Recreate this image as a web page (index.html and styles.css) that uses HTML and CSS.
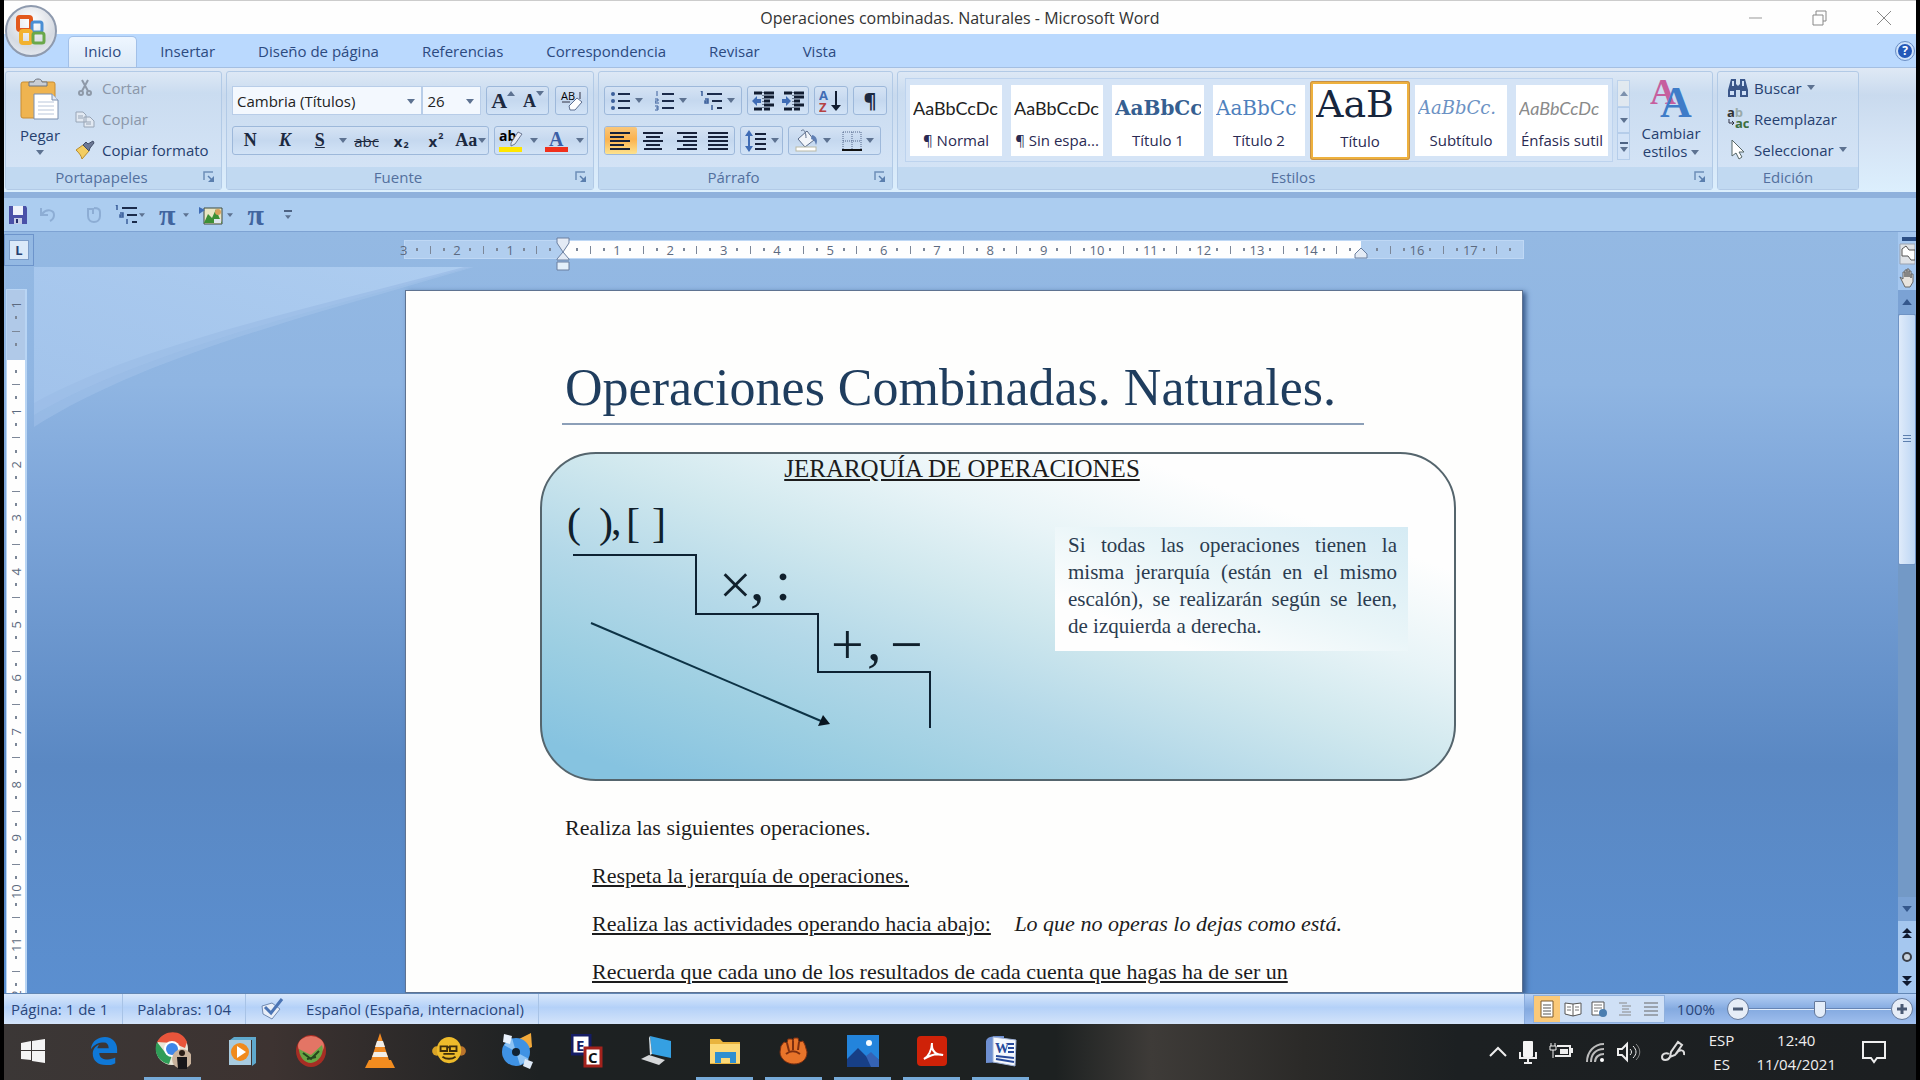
FILE: index.html
```html
<!DOCTYPE html>
<html lang="es">
<head>
    <meta charset="UTF-8">
    <meta name="viewport" content="width=device-width, initial-scale=1.0">
    <title>Operaciones combinadas. Naturales - Microsoft Word</title>
    <link rel="stylesheet" href="styles.css">
</head>
<body>
    <!-- shared symbols -->
    <svg class="defs" aria-hidden="true">
        <symbol id="caret" viewBox="0 0 8 5"><path d="M0 0h8L4 5z" fill="currentColor"/></symbol>
        <symbol id="launcher" viewBox="0 0 12 12"><path d="M1 9V1h9" fill="none" stroke="#6d8fb8" stroke-width="1.5"/><path d="M5 5l4 4" stroke="#5b7fae" stroke-width="1.5"/><path d="M11 5v6H5z" fill="#5b7fae"/></symbol>
        <symbol id="multilevel" viewBox="0 0 24 20"><path d="M8 3h15M13 10h10M18 17h5" stroke="#1b2b4b" stroke-width="2"/><path d="M2 1l1-1v5M6 8h3v4H6v-2h3M13 14v5" stroke="#3b5f9b" stroke-width="1.5" fill="none"/></symbol>
    </svg>

    <header class="titlebar">
        <h1>Operaciones combinadas. Naturales - Microsoft Word</h1>
        <div class="window-buttons">
            <button aria-label="Minimizar"><svg width="16" height="16"><path d="M1 8h13" stroke="#999"/></svg></button>
            <button aria-label="Restaurar"><svg width="16" height="16"><path d="M1 5h10v10H1zM4 5V1h10v10h-3" fill="none" stroke="#888"/></svg></button>
            <button aria-label="Cerrar"><svg width="16" height="16"><path d="M1 1l14 14M15 1L1 15" stroke="#888"/></svg></button>
        </div>
    </header>

    <button class="office-button" aria-label="Botón de Office">
        <svg width="34" height="36" viewBox="0 0 34 36" fill="none" stroke-width="4">
            <rect x="4" y="4" width="13" height="13" rx="2" stroke="#e2581c"/>
            <rect x="18" y="9" width="10" height="10" rx="2" stroke="#4b8fd4" stroke-width="3"/>
            <rect x="7" y="18" width="10" height="12" rx="2" stroke="#f2b230"/>
            <rect x="19" y="20" width="11" height="10" rx="2" stroke="#6aa84a" stroke-width="3"/>
        </svg>
    </button>

    <nav class="tabs">
        <a class="tab active" href="#inicio">Inicio</a>
        <a class="tab" href="#insertar">Insertar</a>
        <a class="tab" href="#diseno">Diseño de página</a>
        <a class="tab" href="#referencias">Referencias</a>
        <a class="tab" href="#correspondencia">Correspondencia</a>
        <a class="tab" href="#revisar">Revisar</a>
        <a class="tab" href="#vista">Vista</a>
        <button class="help" aria-label="Ayuda">?</button>
    </nav>

    <section class="ribbon" id="inicio">
        <div class="group clipboard">
            <div class="group-body">
                <button class="big">
                    <svg width="40" height="42" viewBox="0 0 40 42">
                        <rect x="1" y="4" width="34" height="36" rx="2" fill="#efb450" stroke="#c98d32"/>
                        <path d="M9 8V4h5c0-4 8-4 8 0h5v4z" fill="#c9ced6" stroke="#6d7480"/>
                        <path d="M14 16h18l6 6v19H14z" fill="#fff" stroke="#7b8faf"/>
                        <path d="M32 16v6h6" fill="#dfe8f5" stroke="#7b8faf"/>
                        <path d="M18 24h16M18 28h16M18 32h16M18 36h16" stroke="#b9c6da"/>
                    </svg>
                    <span>Pegar</span>
                    <svg class="caret"><use href="#caret"/></svg>
                </button>
                <div class="stack">
                    <button disabled><svg width="20" height="20"><path d="M7 2l6 11M13 2L7 13" stroke="#8e99a8" stroke-width="2"/><circle cx="6" cy="15" r="2" fill="none" stroke="#8e99a8" stroke-width="2"/><circle cx="14" cy="15" r="2" fill="none" stroke="#8e99a8" stroke-width="2"/></svg>Cortar</button>
                    <button disabled><svg width="20" height="20"><path d="M1 3h7l3 3v7H1zM9 8h6l4 4v6H9z" fill="#e2e9f2" stroke="#98a5b6"/><path d="M11 13h5M11 15h5M3 7h5M3 9h5" stroke="#98a5b6"/></svg>Copiar</button>
                    <button><svg width="20" height="20"><path d="M1 10l7-5 6 6-7 8c-1-4-3-6-6-9z" fill="#f3cd62" stroke="#b98d2e"/><path d="M8 5l3-3 2 2 5-3 1 2-4 5-1 3z" fill="#6c7894" stroke="#434e68"/></svg>Copiar formato</button>
                </div>
            </div>
            <footer>Portapapeles<svg class="launch"><use href="#launcher"/></svg></footer>
        </div>

        <div class="group font">
            <div class="group-body rows">
                <div class="row">
                    <label class="combo family"><select aria-label="Fuente"><option>Cambria (Títulos)</option></select><svg class="caret"><use href="#caret"/></svg></label>
                    <label class="combo size"><select aria-label="Tamaño"><option>26</option></select><svg class="caret"><use href="#caret"/></svg></label>
                    <div class="set grow-set">
                        <button class="serif grow" aria-label="Agrandar fuente">A<svg class="caret up"><use href="#caret"/></svg></button>
                        <button class="serif shrink" aria-label="Encoger fuente">A<svg class="caret"><use href="#caret"/></svg></button>
                    </div>
                    <div class="set clear-set">
                        <button aria-label="Borrar formato"><svg width="24" height="24"><text x="1" y="11" class="tiny">AB</text><path d="M9 17l8-8 5 4-7 8H10z" fill="#fff" stroke="#5d6f90"/><path d="M2 13h8M20 3v7" stroke="#334"/></svg></button>
                    </div>
                </div>
                <div class="row">
                    <div class="set style-set">
                        <button class="serif bold">N</button>
                        <button class="serif bold italic">K</button>
                        <button class="serif bold under">S</button>
                        <button class="drop" aria-label="Subrayado"><svg class="caret"><use href="#caret"/></svg></button>
                        <button class="strike">abc</button>
                        <button class="bold">x<sub>2</sub></button>
                        <button class="bold">x<sup>2</sup></button>
                        <button class="serif bold">Aa<svg class="caret"><use href="#caret"/></svg></button>
                    </div>
                    <div class="set color-set">
                        <button aria-label="Color de resaltado"><svg width="24" height="24"><text x="0" y="12" class="ab">ab</text><path d="M12 14l7-11 4 2-7 10-4 2z" fill="#e9eef8" stroke="#6b7894"/><rect y="18" width="23" height="5" fill="#ffe600"/></svg></button>
                        <button class="drop" aria-label="Más colores de resaltado"><svg class="caret"><use href="#caret"/></svg></button>
                        <button aria-label="Color de fuente"><svg width="24" height="24"><text x="4" y="17" class="color-a">A</text><rect y="18" width="23" height="5" fill="#f0301c"/></svg></button>
                        <button class="drop" aria-label="Más colores de fuente"><svg class="caret"><use href="#caret"/></svg></button>
                    </div>
                </div>
            </div>
            <footer>Fuente<svg class="launch"><use href="#launcher"/></svg></footer>
        </div>

        <div class="group paragraph">
            <div class="group-body rows">
                <div class="row">
                    <div class="set list-set">
                        <button aria-label="Viñetas"><svg width="20" height="20"><path d="M7 3h12M7 10h12M7 17h12" stroke="#1b2b4b" stroke-width="2"/><g fill="#3b5f9b"><circle cx="2" cy="3" r="2"/><circle cx="2" cy="10" r="2"/><circle cx="2" cy="17" r="2"/></g></svg><svg class="caret"><use href="#caret"/></svg></button>
                        <button aria-label="Numeración"><svg width="20" height="20"><path d="M7 3h12M7 10h12M7 17h12" stroke="#1b2b4b" stroke-width="2"/><path d="M2 0v5M0 8h3v2H0v2h4M0 15h3v4H0M1 17h2" fill="none" stroke="#3b5f9b"/></svg><svg class="caret"><use href="#caret"/></svg></button>
                        <button aria-label="Lista multinivel"><svg width="24" height="20"><use href="#multilevel"/></svg><svg class="caret"><use href="#caret"/></svg></button>
                    </div>
                    <div class="set indent-set">
                        <button aria-label="Reducir sangría"><svg width="22" height="20"><path d="M2 2h8M12 2h10M12 6h10M12 10h6M12 14h10M2 18h8M12 18h6" stroke="#111c30" stroke-width="3"/><path d="M11 1v18" stroke="#111c30" stroke-dasharray="1 2"/><path d="M9 8H5V5L0 10l5 5v-3h4z" fill="#3f6cb5"/></svg></button>
                        <button aria-label="Aumentar sangría"><svg width="22" height="20"><path d="M2 2h8M12 2h10M12 6h10M12 10h6M12 14h10M2 18h8M12 18h6" stroke="#111c30" stroke-width="3"/><path d="M11 1v18" stroke="#111c30" stroke-dasharray="1 2"/><path d="M0 8h4V5l5 5-5 5v-3H0z" fill="#3f6cb5"/></svg></button>
                    </div>
                    <div class="set one-set"><button aria-label="Ordenar"><svg width="24" height="24"><text x="0" y="11" class="sort-a">A</text><text x="0" y="23" class="sort-z">Z</text><path d="M17 2v18" stroke="#111c30" stroke-width="2"/><path d="M12 16h10l-5 6z" fill="#111c30"/></svg></button></div>
                    <div class="set one-set"><button class="pilcrow" aria-label="Mostrar todo">¶</button></div>
                </div>
                <div class="row">
                    <div class="set align-set">
                        <button class="pressed" aria-label="Alinear a la izquierda"><svg width="22" height="18"><path d="M0 1h20M0 5h14M0 9h20M0 13h14M0 17h20" stroke="#16213a" stroke-width="2"/></svg></button>
                        <button aria-label="Centrar"><svg width="22" height="18"><path d="M1 1h20M4 5h14M1 9h20M4 13h14M2 17h18" stroke="#16213a" stroke-width="2"/></svg></button>
                        <button aria-label="Alinear a la derecha"><svg width="22" height="18"><path d="M2 1h20M8 5h14M2 9h20M8 13h14M2 17h20" stroke="#16213a" stroke-width="2"/></svg></button>
                        <button aria-label="Justificar"><svg width="22" height="18"><path d="M1 1h20M1 5h20M1 9h20M1 13h20M1 17h20" stroke="#16213a" stroke-width="2"/></svg></button>
                    </div>
                    <div class="set spacing-set"><button aria-label="Interlineado"><svg width="22" height="22"><path d="M10 4h11M10 9h11M10 14h11M10 19h11" stroke="#16213a" stroke-width="2"/><path d="M4 0l4 6H5v10h3l-4 6-4-6h3V6H0z" fill="#3f6cb5"/></svg><svg class="caret"><use href="#caret"/></svg></button></div>
                    <div class="set fill-set">
                        <button aria-label="Sombreado"><svg width="24" height="24"><path d="M3 10l9-8 7 9-9 7z" fill="#f2f5fa" stroke="#5b6b88"/><path d="M6 2c3-3 5 1 5 7" fill="none" stroke="#5b6b88"/><path d="M17 6c5 1 6 6 4 10-1-4-2-5-5-6z" fill="#5f7fb4"/><rect x="1" y="18" width="20" height="4" fill="#fff" stroke="#b9b9a6"/></svg><svg class="caret"><use href="#caret"/></svg></button>
                        <button aria-label="Bordes"><svg width="20" height="20"><path d="M1 1h18v17M1 1v17M10 1v17M1 10h18" fill="none" stroke="#54688c" stroke-dasharray="1 1"/><path d="M0 19h20" stroke="#111" stroke-width="2"/></svg><svg class="caret"><use href="#caret"/></svg></button>
                    </div>
                </div>
            </div>
            <footer>Párrafo<svg class="launch"><use href="#launcher"/></svg></footer>
        </div>

        <div class="group styles">
            <div class="group-body">
                <div class="gallery">
                    <button class="style"><span class="sample">AaBbCcDc</span><span>¶ Normal</span></button>
                    <button class="style"><span class="sample">AaBbCcDc</span><span>¶ Sin espa...</span></button>
                    <button class="style"><span class="sample h1s">AaBbCc</span><span>Título 1</span></button>
                    <button class="style"><span class="sample h2s">AaBbCc</span><span>Título 2</span></button>
                    <button class="style selected"><span class="sample titles">AaB</span><span>Título</span></button>
                    <button class="style"><span class="sample subs">AaBbCc.</span><span>Subtítulo</span></button>
                    <button class="style"><span class="sample emph">AaBbCcDc</span><span>Énfasis sutil</span></button>
                </div>
                <div class="gallery-scroll">
                    <button class="off" aria-label="Arriba"><svg class="caret up"><use href="#caret"/></svg></button>
                    <button aria-label="Abajo"><svg class="caret"><use href="#caret"/></svg></button>
                    <button class="more" aria-label="Más"><svg class="caret"><use href="#caret"/></svg></button>
                </div>
                <button class="big change">
                    <svg width="42" height="40"><text x="0" y="26" class="pink-a">A</text><text x="10" y="39" class="blue-a">A</text></svg>
                    <span>Cambiar<br>estilos <svg class="caret"><use href="#caret"/></svg></span>
                </button>
            </div>
            <footer>Estilos<svg class="launch"><use href="#launcher"/></svg></footer>
        </div>

        <div class="group edit">
            <div class="group-body">
                <div class="stack">
                    <button><svg width="22" height="20"><path d="M4 1h5v5l2 2 2-2V1h5l3 11v7h-8v-7H9v7H1v-7z" fill="#3a5689"/><path d="M3 13h4v4H3zM15 13h4v4h-4zM5 3h2v5H5zM15 3h2v5h-2z" fill="#cfe0f7"/></svg>Buscar <svg class="caret"><use href="#caret"/></svg></button>
                    <button><svg width="22" height="22"><text x="0" y="9" class="rep-a">a<tspan fill="#9aa">b</tspan></text><text x="8" y="20" class="rep-c">ac</text><path d="M2 11v4h5M5 13l2 2-2 2" fill="none" stroke="#334"/></svg>Reemplazar</button>
                    <button><svg width="22" height="22"><path d="M5 1v16l4-3 3 6 3-2-3-5h5z" fill="#fff" stroke="#566"/></svg>Seleccionar <svg class="caret"><use href="#caret"/></svg></button>
                </div>
            </div>
            <footer>Edición</footer>
        </div>
    </section>

    <div class="quickbar">
        <button aria-label="Guardar"><svg width="20" height="20"><path d="M1 1h17l1 2v16H1z" fill="#4a51a8"/><path d="M5 1h10v9H5z" fill="#eef2fb"/><path d="M6 13h8v6H6z" fill="#c6cde6"/><path d="M8 14h2v4H8z" fill="#26306e"/></svg></button>
        <button class="faded" aria-label="Deshacer"><svg width="20" height="20"><path d="M3 3v7h7M4 9c5-6 12-4 12 1 0 3-2 5-4 6" fill="none" stroke="#6f8fba" stroke-width="2"/></svg></button>
        <button class="faded redo" aria-label="Rehacer"><svg width="20" height="20"><path d="M4 3v8c0 8 12 8 12 0V7c0-3-3-4-6-4M4 4h5v5" fill="none" stroke="#6f8fba" stroke-width="2"/></svg></button>
        <button class="multi" aria-label="Lista multinivel"><svg width="24" height="20"><use href="#multilevel"/></svg><svg class="caret"><use href="#caret"/></svg></button>
        <button class="pi">π<svg class="caret"><use href="#caret"/></svg></button>
        <button aria-label="Imagen"><svg width="24" height="20"><path d="M5 3h18v16H5z" fill="#e9e6c4" stroke="#3d4a40"/><path d="M5 18l4-9 4 4 4-9 3 8 3 6z" fill="#3c8f35"/><path d="M0 2l6 3-6 4z" fill="#3f6cb5"/><circle cx="19" cy="7" r="3" fill="#d8a05c"/><path d="M15 14h7v4h-7z" fill="#dfe6ee"/></svg><svg class="caret"><use href="#caret"/></svg></button>
        <button class="pi">π</button>
        <button class="more" aria-label="Personalizar"><svg class="caret"><use href="#caret"/></svg></button>
    </div>

    <main class="workspace">
        <svg class="swoosh" width="440" height="166" viewBox="0 0 440 166">
            <defs><linearGradient id="sw" x1="0" y1="1" x2="1" y2="0"><stop offset="0" stop-color="#a3c4ec"/><stop offset="1" stop-color="#b3d2f3"/></linearGradient></defs>
            <path d="M0 0h440C270 50 110 90 0 160z" fill="#a9c8ee" opacity=".4"/>
            <path d="M0 0h436C265 48 106 86 0 148z" fill="#a9c8ee" opacity=".3"/>
            <path d="M0 0h430C260 45 100 80 0 136z" fill="url(#sw)" opacity=".7"/>
        </svg>

        <div class="left-side">
            <button class="tab-stop" aria-label="Tabulación"><span>L</span></button>
            <div class="vruler"><div class="ticks" id="vticks"></div></div>
        </div>

        <div class="canvas">
            <div class="hruler">
                <div class="ticks" id="hticks"></div>
                <svg class="marker left" width="14" height="34"><path d="M1 1h12v5l-6 9-6-9zM7 15l6 7v1H1v-1z" fill="#e4ebf5" stroke="#6b7f9f"/><path d="M1 25h12v8H1z" fill="#e4f0fb" stroke="#6b7f9f"/></svg>
                <svg class="marker right" width="14" height="12"><path d="M7 1l6 6v4H1V7z" fill="#e4ebf5" stroke="#6b7f9f"/></svg>
            </div>
            <article class="page">
                <h2>Operaciones Combinadas. Naturales.</h2>
                <div class="hierarchy">
                    <h3>JERARQUÍA DE OPERACIONES</h3>
                    <svg class="stairs" width="440" height="260" viewBox="0 0 440 260">
                        <g class="signs">
                            <text x="25" y="53" class="brackets">(</text><text x="57" y="53" class="brackets">)</text><text x="69" y="50" class="comma">,</text><text x="84" y="53" class="brackets">[</text><text x="110" y="53" class="brackets">]</text>
                            <text x="177" y="120">×</text><text x="208" y="116">,</text><text x="233" y="116">:</text>
                            <text x="289" y="180">+</text><text x="325" y="176">,</text><text x="348" y="180">−</text>
                        </g>
                        <path d="M31 71h123v59h122v58h112v56" fill="none" stroke="#0d2233" stroke-width="2"/>
                        <path d="M49 139l230 98" stroke="#0d3346" stroke-width="2"/>
                        <path d="M288 240l-12 2 5-11z" fill="#08141f"/>
                    </svg>
                    <p class="callout">Si todas las operaciones tienen la misma jerarquía (están en el mismo escalón), se realizarán según se leen, de izquierda a derecha.</p>
                </div>
                <p>Realiza las siguientes operaciones.</p>
                <p class="item"><u>Respeta la jerarquía de operaciones.</u></p>
                <p class="item"><u>Realiza las actividades operando hacia abajo:</u> <em>Lo que no operas lo dejas como está.</em></p>
                <p class="item"><u>Recuerda que cada uno de los resultados de cada cuenta que hagas ha de ser un</u></p>
            </article>
        </div>

        <div class="scrollbar">
            <button class="split" aria-label="Dividir"></button>
            <button aria-label="Regla"><svg width="16" height="22"><path d="M1 1h15v20H1z" fill="#dfe2e6" stroke="#9aa3b0"/><path d="M3 6l4-3 3 4h6v10h-4l-3-4H3z" fill="#fff" stroke="#555"/></svg></button>
            <button aria-label="Mano"><svg width="16" height="22"><path d="M1 10l3 2V5h2v5-7h2v7-8h2v8-6h2v7-4h2v8l-3 5H6z" fill="#e8e4de" stroke="#666"/></svg></button>
            <button class="arrow" aria-label="Subir"><svg class="caret up"><use href="#caret"/></svg></button>
            <div class="track"><div class="thumb"></div></div>
            <button class="arrow" aria-label="Bajar"><svg class="caret"><use href="#caret"/></svg></button>
            <button class="nav-btn" aria-label="Página anterior"><svg width="10" height="10"><path d="M0 5l5-5 5 5zM0 10l5-5 5 5z" fill="#101a30"/></svg></button>
            <button class="nav-btn" aria-label="Objeto de búsqueda"><svg width="12" height="12"><circle cx="6" cy="6" r="4" fill="#c9d3de" stroke="#3b3f48" stroke-width="2"/></svg></button>
            <button class="nav-btn" aria-label="Página siguiente"><svg width="10" height="10"><path d="M0 0h10L5 5zM0 5h10l-5 5z" fill="#101a30"/></svg></button>
        </div>
    </main>

    <footer class="statusbar">
        <span class="cell">Página: 1 de 1</span>
        <span class="cell">Palabras: 104</span>
        <span class="cell lang"><svg width="24" height="22"><path d="M2 8l10-3 8 6-8 10-9-5z" fill="#e8eef8" stroke="#7089b0"/><path d="M5 9l6 6L22 1" fill="none" stroke="#4b74b4" stroke-width="3"/></svg>Español (España, internacional)</span>
        <div class="view-zone">
            <div class="views">
                <button class="pressed" aria-label="Diseño de impresión"><svg width="18" height="18"><path d="M3 1h12v16H3z" fill="#fff" stroke="#7a5a30"/><path d="M5 5h8M5 8h8M5 11h8M5 14h8" stroke="#555"/></svg></button>
                <button aria-label="Lectura"><svg width="18" height="18"><path d="M1 3l8 1 8-1v11l-8 2-8-2zM9 4v12" fill="#fff" stroke="#555"/><path d="M3 7h4M3 10h4M11 7h4M11 10h4" stroke="#777"/></svg></button>
                <button aria-label="Diseño Web"><svg width="18" height="18"><path d="M2 2h12v13H2z" fill="#fff" stroke="#555"/><path d="M4 5h8M4 8h8M4 11h4" stroke="#777"/><circle cx="13" cy="13" r="4" fill="#4a7db0"/></svg></button>
                <button aria-label="Esquema"><svg width="18" height="18"><path d="M3 3h8M6 6h9M6 9h7M6 12h9M3 15h12" stroke="#888"/></svg></button>
                <button aria-label="Borrador"><svg width="18" height="18"><path d="M2 3h14M2 7h14M2 11h14M2 15h14" stroke="#666"/></svg></button>
            </div>
            <span class="percent">100%</span>
            <button class="round" aria-label="Alejar"><svg width="22" height="22"><path d="M6 11h10" stroke="#4a5a74" stroke-width="3"/></svg></button>
            <input type="range" min="0" max="100" value="50" aria-label="Zoom">
            <button class="round" aria-label="Acercar"><svg width="22" height="22"><path d="M6 11h10M11 6v10" stroke="#4a5a74" stroke-width="3"/></svg></button>
        </div>
    </footer>

    <nav class="taskbar">
        <button class="app" aria-label="Inicio"><svg width="24" height="24"><path d="M0 4l10-2v9H0zM11 2l13-2v11H11zM0 12h10v9L0 20zM11 12h13v12l-13-2z" fill="#f4f4f4"/></svg></button>
        <button class="app" aria-label="Edge"><svg width="30" height="32" viewBox="0 0 32 32"><path d="M2 14C3 5 10 1 17 1c8 0 13 6 13 13v4H11c0 5 4 7 9 7 3 0 6-1 8-2v6c-3 2-6 2-10 2C9 31 4 26 4 19c0-4 2-8 7-10-1 1-2 3-2 4h12c0-4-2-6-5-6C10 7 6 9 2 14z" fill="#0f78d7"/></svg></button>
        <button class="app open" aria-label="Chrome"><svg width="36" height="38"><circle cx="17" cy="17" r="16" fill="#e9e5d8"/><path d="M2 10C9-3 27-3 32 10l-2 6-12-5z" fill="#e8553b"/><path d="M2 10c-4 9 1 20 12 22l3-9L9 19z" fill="#2f9d57"/><circle cx="17" cy="17" r="8" fill="#fff"/><circle cx="17" cy="17" r="6" fill="#3f86e8"/><circle cx="27" cy="27" r="10" fill="#c9b29c"/><circle cx="27" cy="21" r="3" fill="#2a1d17"/><path d="M22 25h10v12h-9z" fill="#171519"/></svg></button>
        <button class="app" aria-label="Reproductor"><svg width="30" height="32"><path d="M7 2h22v26l-4 3V5H3z" fill="#5fa9cd"/><path d="M2 5h22v25H2z" fill="#a8cbe0"/><circle cx="13" cy="17" r="9" fill="#f08a1d"/><path d="M10 11l9 6-9 6z" fill="#fff"/></svg></button>
        <button class="app" aria-label="Pimiento"><svg width="32" height="34"><ellipse cx="16" cy="17" rx="15" ry="16" fill="#a62d24"/><ellipse cx="16" cy="12" rx="13" ry="10" fill="#e37565"/><path d="M4 15l12 6 11-10c3 8-3 17-11 18C9 29 4 22 4 15z" fill="#6aa544"/><path d="M8 19l8 6 8-8M12 25l9-2" fill="none" stroke="#24481d" stroke-width="2"/></svg></button>
        <button class="app" aria-label="VLC"><svg width="30" height="36"><path d="M15 0l9 27H6z" fill="#f08a24"/><path d="M12 8h6l2 6H10zM9 19h12l2 5H7z" fill="#f1eee9"/><path d="M4 27h22l4 8H0z" fill="#f28c1f"/></svg></button>
        <button class="app" aria-label="Mono"><svg width="34" height="30" viewBox="0 0 36 32"><circle cx="5" cy="16" r="5" fill="#d9a326"/><circle cx="31" cy="16" r="5" fill="#b9742c"/><ellipse cx="18" cy="15" rx="13" ry="14" fill="#eebb2b"/><path d="M9 11h7v5H9zM19 11h7v5h-7zM16 12h3M11 22c4 3 10 3 14 0M12 19h12" fill="none" stroke="#3d2d0c" stroke-width="2"/></svg></button>
        <button class="app" aria-label="Disco"><svg width="34" height="36"><path d="M18 6L30 0l1 14-9 4z" fill="#f2a93b"/><circle cx="15" cy="19" r="14" fill="#3f92e4"/><path d="M15 19L3 12l8-7zM15 19l13 7-9 6z" fill="#8cc2f4"/><circle cx="15" cy="19" r="4" fill="#123"/><path d="M3 1l8 2-2 8-7-2z" fill="#e9f1fb"/><path d="M24 26l8 3-3 7-7-3z" fill="#dfeaf7"/></svg></button>
        <button class="app" aria-label="EC"><svg width="32" height="34"><rect x="1" y="1" width="18" height="19" fill="#fff" stroke="#141c64" stroke-width="3"/><text x="5" y="17" class="ec-e">E</text><rect x="14" y="14" width="16" height="18" fill="#fff" stroke="#a3221c" stroke-width="3"/><text x="17" y="29" class="ec-c">C</text></svg></button>
        <button class="app" aria-label="Equipo"><svg width="32" height="32"><path d="M10 1l21 5v17l-19-4z" fill="#35a0e2"/><path d="M10 1l2 18-2 1L9 3z" fill="#d9e4ec"/><path d="M1 24l8-4 16 5-6 5z" fill="#d5d7d9"/></svg></button>
        <button class="app open" aria-label="Explorador"><svg width="32" height="28"><path d="M1 2h10l3 3h17v22H1z" fill="#e9b33d"/><path d="M1 7h30v19H1z" fill="#fcd978"/><path d="M6 26V15h21v11h-6v-5h-9v5z" fill="#2f8fd0"/></svg></button>
        <button class="app open" aria-label="Mano"><svg width="30" height="28"><path d="M2 9l3-4 3 1 1-4h4l1 2 1-3h4l1 4 4-1 2 4 2 7c0 8-6 12-13 12S1 22 1 15z" fill="#e8742a" stroke="#7e2f10"/><path d="M8 6l2 8M14 4v9M20 5l-1 8M7 17c5-4 10-3 14 0" fill="none" stroke="#7e2f10" stroke-width="2"/></svg></button>
        <button class="app open" aria-label="Fotos"><svg width="32" height="32"><path d="M0 0h32v32H0z" fill="#2384dc"/><path d="M0 24l11-11 11 11 4-4 6 5v7H0z" fill="#173f86"/><path d="M19 21l5-4 8 8v7H24z" fill="#3563b5"/><circle cx="22" cy="8" r="3" fill="#f4fbff"/></svg></button>
        <button class="app open" aria-label="Acrobat"><svg width="30" height="30"><rect width="30" height="30" rx="4" fill="#cf2208"/><path d="M7 23c4-2 8-9 8-16-1 8 4 12 11 12-6-2-13 0-19 4z" fill="none" stroke="#fff" stroke-width="2"/></svg></button>
        <button class="app open" aria-label="Word"><svg width="34" height="32"><path d="M2 6c2-5 6-5 18-5v26L2 28z" fill="#6e8fd1"/><path d="M9 2l23 3-1 26-22-4z" fill="#f5f8fd" stroke="#9fb2d6"/><text x="11" y="18" class="word-w">W</text><path d="M24 9h6M24 13h6M24 17h6M12 21l18 2M12 24l18 3" stroke="#27499a" stroke-width="2"/></svg></button>
        <div class="tray">
            <button aria-label="Iconos ocultos"><svg width="18" height="24"><path d="M1 16l8-8 8 8" fill="none" stroke="#eee" stroke-width="2"/></svg></button>
            <button aria-label="Micrófono"><svg width="18" height="24"><rect x="4" y="1" width="10" height="16" rx="1" fill="#f4f4f4"/><path d="M1 12v6h16v-6M9 18v5M5 23h8" fill="none" stroke="#eee" stroke-width="2"/></svg></button>
            <button aria-label="Batería"><svg width="24" height="24"><path d="M8 6h13v10H6M22 9h1v4" fill="none" stroke="#eee" stroke-width="2"/><path d="M11 9h8v5h-8z" fill="#eee"/><path d="M2 3v3M6 3v3M1 6h6v4H1zM4 10v8" fill="none" stroke="#eee"/></svg></button>
            <button aria-label="Red"><svg width="20" height="24"><path d="M2 22C2 12 9 4 19 4M6 22c0-8 5-13 13-13M10 22c0-5 4-8 9-8" fill="none" stroke="#bbb" stroke-width="2"/><circle cx="17" cy="20" r="2" fill="#fff"/></svg></button>
            <button aria-label="Volumen"><svg width="24" height="24"><path d="M1 9h4l5-5v16l-5-5H1z" fill="none" stroke="#eee" stroke-width="2"/><path d="M13 9c2 2 2 4 0 6M16 6c4 4 4 8 0 12" fill="none" stroke="#eee"/><path d="M19 4c5 5 5 11 0 16" fill="none" stroke="#888"/></svg></button>
            <button class="pen" aria-label="Lápiz"><svg width="24" height="24"><path d="M8 14c-3-2-7 0-7 3 0 4 6 4 8 0M9 17l1-5 7-10 4 3-7 10zM15 14c3-5 9-5 8 1" fill="none" stroke="#ddd" stroke-width="2"/></svg></button>
            <span class="two-lines lang-code">ESP<br>ES</span>
            <time class="two-lines" datetime="2021-04-11T12:40">12:40<br>11/04/2021</time>
            <button class="notify" aria-label="Notificaciones"><svg width="24" height="24"><path d="M1 2h22v16h-8l-3 4-3-4H1z" fill="none" stroke="#eee" stroke-width="2"/></svg></button>
        </div>
    </nav>

    <script>
        // One tick per quarter of a centimetre: number, dot, bar, dot
        function drawTicks(id, first, count, hidden) {
            const box = document.getElementById(id);
            for (let i = 0; i < count; i++) {
                const tick = document.createElement("span");
                const cm = first + Math.floor(i / 4);
                if (i % 4 === 0) {
                    tick.className = "num";
                    tick.innerText = hidden.includes(cm) ? "" : Math.abs(cm);
                } else {
                    tick.className = i % 4 === 2 ? "bar" : "dot";
                }
                box.appendChild(tick);
            }
        }

        drawTicks("hticks", -3, 84, [0, 15]);
        drawTicks("vticks", -1, 72, [0]);
    </script>
</body>
</html>
```

FILE: styles.css
```css
* {
    box-sizing: border-box;
    margin: 0;
    padding: 0;
}

body {
    position: relative;
    display: flex;
    flex-direction: column;
    height: 100vh;
    overflow: hidden;
    border: solid #000;
    border-width: 0 4px;
    background: #94b9e3;
    font-family: "Open Sans", "Noto Sans", sans-serif;
    font-size: 15px;
    color: #26406f;
}

button,
select {
    border: 0;
    background: none;
    font: inherit;
    color: inherit;
}

button {
    display: flex;
    align-items: center;
    justify-content: center;
    flex: none;
}

svg {
    flex: none;
}

.defs {
    position: absolute;
    width: 0;
    height: 0;
}

.caret {
    width: 8px;
    height: 5px;
    color: #5d7291;
}

.caret.up {
    transform: rotate(180deg);
}

/* Title bar */
.titlebar {
    display: flex;
    align-items: center;
    justify-content: center;
    flex: none;
    height: 34px;
    border-top: 1px solid #ccc;
    background: #fefefe;
}

.titlebar h1 {
    font-size: 16px;
    font-weight: normal;
    color: #333;
}

.window-buttons {
    position: absolute;
    right: 0;
    display: flex;
}

.window-buttons button {
    width: 64px;
    height: 30px;
}

.office-button {
    position: absolute;
    z-index: 2;
    left: 1px;
    top: 5px;
    width: 52px;
    height: 52px;
    border: 2px solid #8e9aae;
    border-radius: 50%;
    background: radial-gradient(circle at 50% 30%, #fff, #d5dae2 60%, #eef2f7);
}

/* Tabs */
.tabs {
    display: flex;
    align-items: flex-end;
    flex: none;
    height: 33px;
    padding-left: 64px;
    background: #bad9fe;
}

.tab {
    padding: 0 20px;
    height: 31px;
    margin-right: 3px;
    line-height: 30px;
    color: #2c4a80;
    text-decoration: none;
}

.tab.active {
    padding: 0 15px;
    border: 1px solid #a2c0e8;
    border-bottom: 0;
    border-radius: 5px 5px 0 0;
    background: linear-gradient(#eef6ff, #dce9f7);
    line-height: 28px;
}

.help {
    align-self: center;
    width: 18px;
    height: 18px;
    margin-left: auto;
    margin-right: 2px;
    border: 2px solid #cfe2fa;
    border-radius: 50%;
    background: #2458b8;
    font-size: 12px;
    font-weight: bold;
    color: #fff;
    outline: 1px solid #6c8fc4;
}

/* Ribbon */
.ribbon {
    display: flex;
    gap: 4px;
    flex: none;
    height: 125px;
    padding: 3px 1px 2px;
    border-top: 1px solid #a4bfe2;
    background: linear-gradient(#dfe9f5, #c9daee 22%, #d5e4f5 60%, #dceffd);
}

.group {
    display: flex;
    flex-direction: column;
    flex: none;
    border: 1px solid #b2cae6;
    border-radius: 3px;
    background: linear-gradient(#dde8f5, #cadcf0 18%, #d6e5f7);
}

.group.clipboard {
    width: 217px;
}

.group.font {
    width: 368px;
}

.group.paragraph {
    width: 295px;
}

.group.styles {
    width: 816px;
}

.group.edit {
    width: 142px;
}

.group-body {
    display: flex;
    flex: 1;
    min-height: 0;
    padding: 0 6px;
}

.group footer {
    position: relative;
    height: 22px;
    padding-right: 24px;
    line-height: 21px;
    background: #c1d9f1;
    text-align: center;
    color: #53709e;
}

.edit footer {
    padding-right: 0;
}

.launch {
    position: absolute;
    right: 6px;
    top: 4px;
    width: 12px;
    height: 12px;
}

.big {
    flex-direction: column;
    justify-content: flex-start;
    width: 56px;
    padding-top: 6px;
    line-height: 18px;
    gap: 6px;
}

.stack {
    display: flex;
    flex-direction: column;
    padding-left: 7px;
}

.stack button {
    gap: 7px;
    height: 31px;
    justify-content: flex-start;
}

.stack button:disabled {
    color: #8b97a9;
}

.group-body.rows {
    flex-direction: column;
    gap: 11px;
    padding: 14px 5px 0;
}

.row {
    display: flex;
    gap: 5px;
    height: 29px;
}

.combo {
    position: relative;
    display: flex;
    border: 1px solid #b8cde8;
    background: #f3f8fe;
}

.combo select {
    width: 100%;
    padding-left: 4px;
    appearance: none;
    color: #222;
}

.combo .caret {
    position: absolute;
    right: 6px;
    top: 12px;
}

.family {
    width: 191px;
    margin-right: -5px;
}

.size {
    width: 59px;
}

.set {
    display: flex;
    border: 1px solid #9db8da;
    border-radius: 3px;
    background: linear-gradient(#d5e3f4, #c5d8ef 50%, #d2e3f6);
}

.set button {
    flex: 1 1 auto;
    gap: 4px;
    color: #1c2940;
}

.grow-set {
    width: 63px;
}

.clear-set {
    width: 33px;
    margin-left: 1px;
}

.style-set {
    width: 257px;
}

.style-set button {
    flex: 1 1 30px;
}

.style-set .drop {
    flex: 0 0 12px;
}

.color-set {
    width: 94px;
}

.list-set {
    width: 139px;
}

.indent-set {
    width: 63px;
}

.one-set {
    width: 34px;
}

.align-set {
    width: 131px;
}

.spacing-set {
    width: 43px;
}

.fill-set {
    width: 93px;
}

.serif {
    font-family: "Liberation Serif", serif;
    font-size: 18px;
}

.set .grow,
.set .shrink {
    gap: 0;
    font-size: 22px;
    font-weight: bold;
    line-height: 24px;
}

.set .shrink {
    font-size: 18px;
}

.grow .caret,
.shrink .caret {
    align-self: flex-start;
    margin-top: 4px;
}

.set sup,
.set sub {
    font-size: 9px;
    line-height: 12px;
}

.bold {
    font-weight: bold;
}

.italic {
    font-style: italic;
}

.under {
    text-decoration: underline;
}

.strike {
    text-decoration: line-through;
}

.set .bold {
    gap: 1px;
}

.set sup {
    align-self: flex-start;
    margin-top: 3px;
}

.set sub {
    align-self: flex-end;
    margin-bottom: 3px;
}

.set .pressed {
    background: linear-gradient(#f9c77b, #fbb24e 45%, #fde28e);
    border-radius: 2px;
}

.pilcrow {
    font-size: 20px;
    font-weight: bold;
    line-height: 24px;
}

.tiny {
    font: 11px "Open Sans", sans-serif;
}

.ab {
    font: bold 14px "Open Sans", sans-serif;
}

.color-a {
    font: bold 20px "Liberation Serif", serif;
    fill: #3b5ea5;
}

.sort-a,
.sort-z {
    font: bold 13px "Open Sans", sans-serif;
    fill: #3f6cb5;
}

.sort-z {
    fill: #b54242;
}

/* Style gallery */
.gallery {
    display: flex;
    gap: 1px;
    height: 84px;
    margin: 6px 0 0 1px;
    padding: 2px 0;
    border: 1px solid #bdd3ee;
    background: #d5e4f6;
}

.style {
    flex-direction: column;
    justify-content: flex-end;
    width: 100px;
    height: 79px;
    padding: 0 3px 6px;
    border: 4px solid #d5e4f6;
    background: #fff;
    color: #2a2a52;
    font-size: 15px;
    line-height: 20px;
    overflow: hidden;
    white-space: nowrap;
}

.style.selected {
    border: 3px solid #eeb13e;
    border-radius: 3px;
    outline: 1px solid #c69048;
    outline-offset: -1px;
}

.sample {
    align-self: stretch;
    height: 36px;
    overflow: hidden;
    font-family: "Lato", sans-serif;
    font-size: 18px;
    line-height: 28px;
    text-align: left;
    color: #222;
}

.h1s {
    font-family: "DejaVu Serif", serif;
    font-size: 20px;
    font-weight: bold;
    color: #365f91;
}

.h2s {
    font-family: "DejaVu Serif", serif;
    font-size: 20px;
    color: #4f81bd;
}

.titles {
    height: 45px;
    font-family: "DejaVu Serif", serif;
    font-size: 38px;
    line-height: 36px;
    color: #17263d;
}

.subs {
    font-family: "DejaVu Serif", serif;
    font-style: italic;
    color: #6c92c4;
}

.emph {
    font-style: italic;
    color: #8a8a8a;
}

.gallery-scroll {
    display: flex;
    flex-direction: column;
    width: 20px;
    height: 80px;
    margin: 8px 0 0 4px;
}

.gallery-scroll button {
    flex: 1;
    border: 1px solid #b5cdea;
    background: #d3e3f7;
}

.gallery-scroll .off {
    background: #e9eef0;
    opacity: .7;
}

.more {
    flex-direction: column;
}

.more::before {
    content: "";
    width: 8px;
    height: 2px;
    margin-bottom: 3px;
    background: #4d6384;
}

.gallery-scroll .more,
.quickbar .more {
    gap: 0;
}

.change {
    width: 70px;
    margin-left: 6px;
    gap: 6px;
}

.change .caret {
    display: inline;
    vertical-align: middle;
}

.pink-a {
    font: bold 36px "Liberation Serif", serif;
    fill: #c65f9e;
}

.blue-a {
    font: bold 44px "Liberation Serif", serif;
    fill: #3f7cc8;
}

.edit .stack {
    padding-left: 3px;
}

.edit .stack button {
    gap: 5px;
}

.edit .group-body {
    padding-right: 0;
}

.rep-a,
.rep-c {
    font: bold 13px "Open Sans", sans-serif;
    fill: #333;
}

.rep-c {
    fill: #3d6e3d;
}

/* Quick access bar */
.quickbar {
    display: flex;
    align-items: center;
    flex: none;
    gap: 10px;
    height: 40px;
    padding: 0 4px;
    border-top: 6px solid #8fb1dc;
    border-bottom: 1px solid #7ea3d3;
    background: #accdf0;
}

.quickbar button {
    gap: 4px;
    height: 24px;
}

.quickbar .caret {
    width: 6px;
    height: 4px;
}

.quickbar .faded {
    opacity: .5;
}

.quickbar .redo {
    margin-left: 16px;
}

.quickbar .multi {
    gap: 1px;
}

.quickbar .pi {
    gap: 8px;
    padding-left: 4px;
    font: bold 30px "Liberation Serif", serif;
    line-height: 24px;
    color: #41659f;
}

.quickbar .more {
    margin-left: 10px;
}

/* Workspace */
.workspace {
    position: relative;
    display: flex;
    flex: 1;
    min-height: 0;
    background: linear-gradient(#94b9e3, #8fb5e2 20%, #7fa7da 34%, #5a88c3 70%, #5b8fd0);
}

.swoosh {
    position: absolute;
    left: 30px;
    top: 35px;
}

.left-side {
    display: flex;
    flex-direction: column;
    width: 30px;
}

.tab-stop {
    width: 30px;
    height: 32px;
    margin-top: 2px;
    border: 1px solid #6d94cb;
}

.tab-stop span {
    width: 20px;
    height: 20px;
    border: 1px solid #7c9cc8;
    background: #dbe9f9;
    font-size: 13px;
    font-weight: bold;
    line-height: 18px;
}

.vruler {
    flex: 1;
    width: 21px;
    margin-top: 23px;
    margin-left: 2px;
    border: solid #b9d5f4;
    border-width: 1px 2px 0 1px;
    background: linear-gradient(#b0c9e8 70px, #fefefe 70px);
    overflow: hidden;
}

.vruler .ticks {
    display: grid;
    grid-auto-rows: 1fr;
    height: 960px;
    margin-top: 8px;
}

.ticks span {
    display: flex;
    align-items: center;
    justify-content: center;
    min-width: 0;
    min-height: 0;
    font-size: 13px;
    color: #5c6a80;
}

.ticks .dot::after,
.ticks .bar::after {
    content: "";
    width: 2px;
    height: 3px;
    background: #7c8798;
}

.ticks .bar::after {
    width: 1px;
    height: 8px;
}

.vruler .num {
    transform: rotate(-90deg);
}

.vruler .bar::after {
    width: 8px;
    height: 1px;
}

.canvas {
    display: flex;
    flex: 1;
    flex-direction: column;
    align-items: center;
    min-width: 0;
    padding-right: 4px;
    overflow: hidden;
}

.hruler {
    position: relative;
    flex: none;
    width: 1120px;
    height: 19px;
    margin-top: 8px;
    margin-bottom: 31px;
    border: 1px solid #bfd8f5;
    background: linear-gradient(90deg, #b1ceef 158px, #fefefe 158px, #fefefe 956px, #b1ceef 956px);
}

.hruler .ticks {
    display: grid;
    grid-auto-flow: column;
    grid-auto-columns: 1fr;
    width: 1120px;
    height: 17px;
    margin-left: -8px;
}

.marker {
    position: absolute;
    left: 151px;
    top: -4px;
}

.marker.right {
    left: 949px;
    top: 6px;
}

/* Document */
.page {
    flex: 1;
    width: 1118px;
    min-height: 0;
    padding: 65px 134px 0 156px;
    border: 1px solid #5f7391;
    background: #fefefd;
    box-shadow: 3px 2px 5px #3a5c8c;
    overflow: hidden;
    font-family: "Liberation Serif", serif;
    font-size: 22px;
    line-height: 28px;
    color: #1c1c1c;
}

.page h2 {
    height: 69px;
    padding-left: 3px;
    margin-right: 24px;
    border-bottom: 2px solid #8c9fb8;
    font-size: 52px;
    font-weight: normal;
    line-height: 64px;
    white-space: nowrap;
    color: #1f3d5e;
}

.hierarchy {
    position: relative;
    height: 329px;
    margin: 27px -68px 33px -22px;
    border: 2px solid #55656d;
    border-radius: 56px;
    background: linear-gradient(to top right, #86c3e0 6%, #9dcfe2 22%, #b3d8e8 36%, #d0e8ee 52%, #e8f4f7 66%, #fefefe 82%);
}

.hierarchy h3 {
    margin-right: 72px;
    font-size: 25px;
    font-weight: normal;
    line-height: 30px;
    text-align: center;
    text-decoration: underline;
}

.stairs {
    display: block;
}

.signs {
    font-size: 58px;
    fill: #10202c;
}

.signs .brackets,
.signs .comma {
    font-size: 42px;
}

.callout {
    position: absolute;
    right: 46px;
    top: 73px;
    width: 353px;
    height: 124px;
    padding: 5px 11px 0 13px;
    background: linear-gradient(200deg, #d5ebf4, #e9f5f8 45%, #fefefe 80%);
    font-size: 21px;
    line-height: 27px;
    text-align: justify;
    color: #2b3c50;
}

.page > p {
    padding-left: 3px;
    margin-bottom: 20px;
    white-space: nowrap;
}

.page > .item {
    padding-left: 30px;
}

.item em {
    margin-left: 18px;
}

/* Vertical scroll bar */
.scrollbar {
    display: flex;
    flex-direction: column;
    width: 18px;
    background: #a5c7ef;
}

.scrollbar button {
    height: 24px;
}

.scrollbar .split {
    height: 4px;
    margin: 5px 0 1px 4px;
    background: #2c4f86;
}

.scrollbar .arrow {
    height: 24px;
    background: #7ba2d4;
}

.scrollbar .arrow .caret {
    width: 10px;
    height: 6px;
    color: #34578c;
}

.track {
    flex: 1;
    background: #7399c6;
}

.thumb {
    height: 43%;
    border: 1px solid #6f93c4;
    border-radius: 2px;
    background:
        repeating-linear-gradient(#5d7fae 0 1px, transparent 1px 3px) center / 8px 9px no-repeat,
        linear-gradient(90deg, #dfebfa, #bdd6f4);
}

/* Status bar */
.statusbar {
    display: flex;
    align-items: center;
    flex: none;
    height: 31px;
    border-top: 1px solid #6287b5;
    background: linear-gradient(#d9e8fb, #b4d1f8 45%, #d4e4fa);
    color: #2a477c;
}

.cell {
    display: flex;
    align-items: center;
    gap: 22px;
    height: 30px;
    padding: 0 14px;
    border-right: 1px solid #a8c3e6;
}

.cell:first-child {
    padding-left: 7px;
}

.view-zone {
    display: flex;
    align-items: center;
    gap: 12px;
    height: 30px;
    margin-left: auto;
    padding: 0 3px 0 8px;
    border-left: 1px solid #89abdc;
    background: linear-gradient(#b5d0f5, #84aae0 50%, #a0bfee);
}

.views {
    display: flex;
    border: 1px solid #8fb0dd;
    background: #cfe0f6;
}

.views button {
    width: 26px;
    height: 26px;
}

.views .pressed {
    background: #fbc978;
}

.round {
    width: 22px;
    height: 22px;
    border: 1px solid #64799b;
    border-radius: 50%;
    background: #e6edf7;
}

.view-zone input {
    width: 142px;
    height: 22px;
    margin: 0 -12px;
    appearance: none;
    background: linear-gradient(transparent 10px, #6685b5 10px, #6685b5 11px, #e1edfc 11px, #e1edfc 12px, transparent 12px);
}

.view-zone input::-webkit-slider-thumb {
    appearance: none;
    width: 12px;
    height: 17px;
    border: 1px solid #64799b;
    border-radius: 1px 1px 6px 6px;
    background: #e3edf9;
}

/* Taskbar */
.taskbar {
    display: flex;
    flex: none;
    height: 56px;
    background: linear-gradient(90deg, #3b3736, #3d3331 14%, #1d2122 28%, #1d2121 55%, #3e3b38 60%, #2b2a28 68%, #1c2022 76%, #1c1f21);
    color: #eee;
}

.app {
    width: 57px;
    height: 56px;
    margin-right: 12px;
    border-bottom: 3px solid transparent;
}

.app:first-child {
    margin-right: 14px;
}

.app.open {
    border-color: #76aad8;
}

.tray {
    display: flex;
    align-items: center;
    gap: 12px;
    margin-left: auto;
    padding-right: 30px;
}

.pen {
    margin-left: 8px;
}

.two-lines {
    font-size: 15px;
    line-height: 24px;
    text-align: center;
}

.lang-code {
    margin: 0 10px 0 12px;
}

.notify {
    margin-left: 14px;
}

.ec-e,
.ec-c {
    font: bold 15px "Open Sans", sans-serif;
    fill: #141c64;
}

.ec-c {
    fill: #111;
}

.word-w {
    font: bold 14px "Liberation Serif", serif;
    fill: #27499a;
}
```
